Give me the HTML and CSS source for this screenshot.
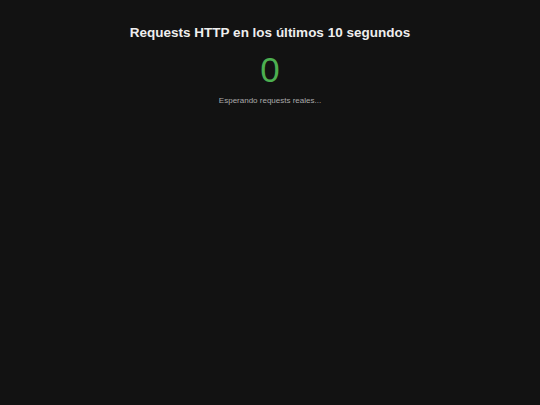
FILE: index.html
```html
<!DOCTYPE html>
<html lang="es">
<head>
<meta charset="utf-8">
<link rel="stylesheet" href="styles.css">
</head>
<body>
<div class="panel">
  <h2 class="title">Requests HTTP en los últimos 10 segundos</h2>
  <div class="count">0</div>
  <p class="status">Esperando requests reales...</p>
</div>
</body>
</html>
```
FILE: styles.css
```css
html, body {
  margin: 0;
  padding: 0;
  background: #121212;
  height: 100%;
}
body {
  font-family: "Liberation Sans", Arial, sans-serif;
  color: #eeeeee;
}
.panel {
  display: flex;
  flex-direction: column;
  align-items: center;
  padding-top: 25px;
}
.title {
  margin: 0;
  font-size: 13.5px;
  font-weight: bold;
  line-height: 16px;
  color: #eeeeee;
}
.count {
  margin-top: 9px;
  font-size: 35px;
  line-height: 40px;
  color: #4caf50;
}
.status {
  margin: 6px 0 0;
  font-size: 8px;
  line-height: 10px;
  color: #aaaaaa;
}
```
